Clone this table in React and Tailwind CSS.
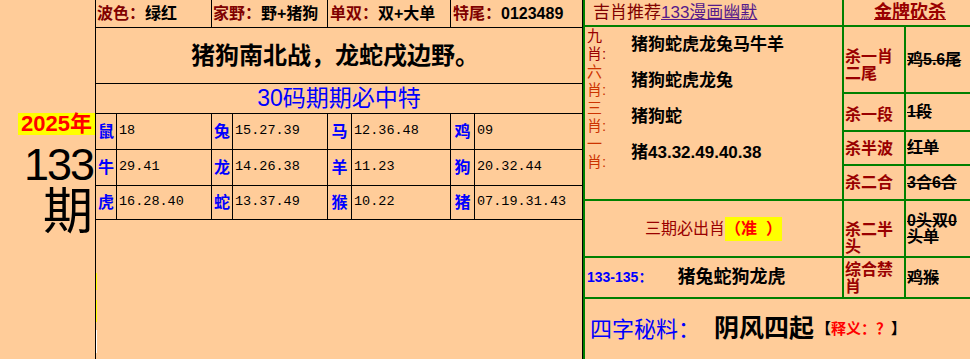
import React from "react";

const gridRows = [
  [["鼠", "18"], ["兔", "15.27.39"], ["马", "12.36.48"], ["鸡", "09"]],
  [["牛", "29.41"], ["龙", "14.26.38"], ["羊", "11.23"], ["狗", "20.32.44"]],
  [["虎", "16.28.40"], ["蛇", "13.37.49"], ["猴", "10.22"], ["猪", "07.19.31.43"]],
];
const labelW = ["w-[21px]", "w-[21px]", "w-[24px]", "w-[24px]"];
const valueW = ["w-[95px]", "w-[95px]", "w-[99px]", "w-[107px]"];
const rowH = ["h-[36px]", "h-[36px]", "h-[34px]"];

const zodiacRows = [
  { n: "九", c: "text-[#990000]", v: "猪狗蛇虎龙兔马牛羊" },
  { n: "六", c: "text-[#CC3300]", v: "猪狗蛇虎龙兔" },
  { n: "三", c: "text-[#CC3300]", v: "猪狗蛇" },
  { n: "一", c: "text-[#CC3300]", v: "猪43.32.49.40.38" },
];

function KillLabel({ children, extra = "" }) {
  return (
    <div
      className={`w-[62px] h-full border-r-2 border-[#008000] flex flex-col pl-[1px] text-[16px] leading-[17px] font-bold text-[#990000] ${extra}`}
    >
      <div>{children}</div>
    </div>
  );
}

function KillValue({ children }) {
  return (
    <div className="flex-1 h-full flex items-center pl-[1px] text-[16px] leading-[16px] font-bold text-black">
      <span className="w-[60px] line-through">{children}</span>
    </div>
  );
}

export default function App() {
  return (
    <div className="w-[970px] h-[359px] bg-[#FFCC99] flex overflow-hidden font-['Liberation_Sans','Noto_Sans_CJK_SC',sans-serif] text-black">
      {/* Left panel */}
      <div className="w-[96px] h-full border-r border-black flex flex-col items-end pt-[113px]">
        <div className="bg-[#FFFF00] text-[#FF0000] font-bold text-[22px] leading-[22px] px-[3px]">
          2025年
        </div>
        <div className="text-[45px] leading-[45px] mt-[7px] tracking-[-2px] mr-[2px]">133</div>
        <div className="text-[50px] leading-[50px] mr-[2px]">期</div>
      </div>

      {/* Middle panel */}
      <div className="w-[487px] h-full border-r border-black flex flex-col">
        <div className="h-[28px] border-b border-black flex text-[16px] font-bold">
          <div className="w-[116px] border-r border-black flex items-center pl-[1px]">
            <span className="text-[#800000]">波色：</span>绿红
          </div>
          <div className="w-[116px] border-r border-black flex items-center pl-[1px]">
            <span className="text-[#800000]">家野：</span>野+猪狗
          </div>
          <div className="w-[123px] border-r border-black flex items-center pl-[2px]">
            <span className="text-[#800000]">单双：</span>双+大单
          </div>
          <div className="w-[130px] flex items-center pl-[2px]">
            <span className="text-[#800000]">特尾：</span>0123489
          </div>
        </div>
        <div className="h-[56px] border-b border-black flex items-center justify-center text-[24px] font-bold pr-[8px]">
          猪狗南北战，龙蛇戌边野。
        </div>
        <div className="h-[30px] border-b border-black flex items-center justify-center text-[23px] text-[#0000FF]">
          30码期期必中特
        </div>
        {gridRows.map((row, ri) => (
          <div key={ri} className={`${rowH[ri]} border-b border-black flex`}>
            {row.map(([z, nums], ci) => (
              <React.Fragment key={ci}>
                <div
                  className={`${labelW[ci]} h-full border-r border-black flex items-center justify-center text-[16px] font-bold text-[#0000FF]`}
                >
                  {z}
                </div>
                <div
                  className={`${valueW[ci]} h-full ${ci < 3 ? "border-r border-black" : ""} flex items-center pl-[2px] text-[13.5px] font-['Liberation_Mono',monospace]`}
                >
                  {nums}
                </div>
              </React.Fragment>
            ))}
          </div>
        ))}
        <div className="flex-1 flex flex-col pt-[53px]">
          <div className="w-px h-[17px] bg-[#FFFF00]" />
          <div className="w-px h-[22px] bg-[#FFFF00] mt-[10px]" />
          <div className="w-px h-[23px] bg-white mt-[8px]" />
        </div>
      </div>

      {/* Right panel */}
      <div className="w-[387px] h-full border-l-2 border-[#008000] flex flex-col">
        {/* header */}
        <div className="h-[27px] border-b-2 border-[#008000] flex">
          <div className="w-[259px] border-r-2 border-[#008000] flex items-center pl-[8px] text-[17px]">
            <span className="text-[#800000]">吉肖推荐</span>
            <span className="text-[#551A8B] underline">133漫画幽默</span>
          </div>
          <div className="flex-1 flex items-center justify-center pl-[6px] text-[18px] font-bold text-[#990000] underline">
            金牌砍杀
          </div>
        </div>

        {/* group 1 */}
        <div className="h-[174px] border-b-2 border-[#008000] flex">
          <div className="w-[259px] h-full border-r-2 border-[#008000] flex flex-col">
            {zodiacRows.map((r) => (
              <div key={r.n} className="h-[36px] flex items-center">
                <div className={`w-[46px] h-full pl-[2px] flex flex-col text-[15px] leading-[18px] ${r.c}`}>
                  <span>{r.n}</span>
                  <span>肖:</span>
                </div>
                <div className="text-[17px] font-bold">{r.v}</div>
              </div>
            ))}
          </div>
          <div className="flex-1 h-full flex flex-col">
            <div className="h-[67px] border-b-2 border-[#008000] flex">
              <KillLabel extra="justify-center pt-[11px]">杀一肖二尾</KillLabel>
              <KillValue>鸡5.6尾</KillValue>
            </div>
            <div className="h-[38px] border-b-2 border-[#008000] flex">
              <KillLabel extra="justify-center pt-[4px]">杀一段</KillLabel>
              <KillValue>1段</KillValue>
            </div>
            <div className="h-[34px] border-b-2 border-[#008000] flex">
              <KillLabel extra="justify-center">杀半波</KillLabel>
              <KillValue>红单</KillValue>
            </div>
            <div className="flex-1 flex">
              <KillLabel extra="justify-center">杀二合</KillLabel>
              <KillValue>3合6合</KillValue>
            </div>
          </div>
        </div>

        {/* row 2 */}
        <div className="h-[57px] border-b-2 border-[#008000] flex">
          <div className="w-[259px] h-full border-r-2 border-[#008000] flex items-center justify-center text-[16px]">
            <span className="text-[#990000]">三期必出肖</span>
            <span className="bg-[#FFFF00] text-[#FF0000] font-bold">（准&nbsp;&nbsp;）</span>
          </div>
          <div className="flex-1 h-full flex">
            <KillLabel extra="justify-end pb-[1px]">杀二半头</KillLabel>
            <KillValue>0头双0头单</KillValue>
          </div>
        </div>

        {/* row 3 */}
        <div className="h-[41px] border-b-2 border-[#008000] flex">
          <div className="w-[259px] h-full border-r-2 border-[#008000] flex items-center pl-[2px]">
            <span className="text-[14px] font-bold text-[#0000FF]">133-135：</span>
            <span className="ml-[25px] text-[18px] font-bold">猪兔蛇狗龙虎</span>
          </div>
          <div className="flex-1 h-full flex">
            <KillLabel extra="justify-center">综合禁肖</KillLabel>
            <KillValue>鸡猴</KillValue>
          </div>
        </div>

        {/* row 4 */}
        <div className="flex-1 flex items-center pl-[5px]">
          <span className="text-[22px] text-[#0000FF]">四字秘料：</span>
          <span className="ml-[14px] text-[25px] font-bold">阴风四起</span>
          <span className="ml-[2px] text-[15px] font-bold">
            【<span className="text-[#FF0000]">释义：？</span>】
          </span>
        </div>
      </div>
    </div>
  );
}
